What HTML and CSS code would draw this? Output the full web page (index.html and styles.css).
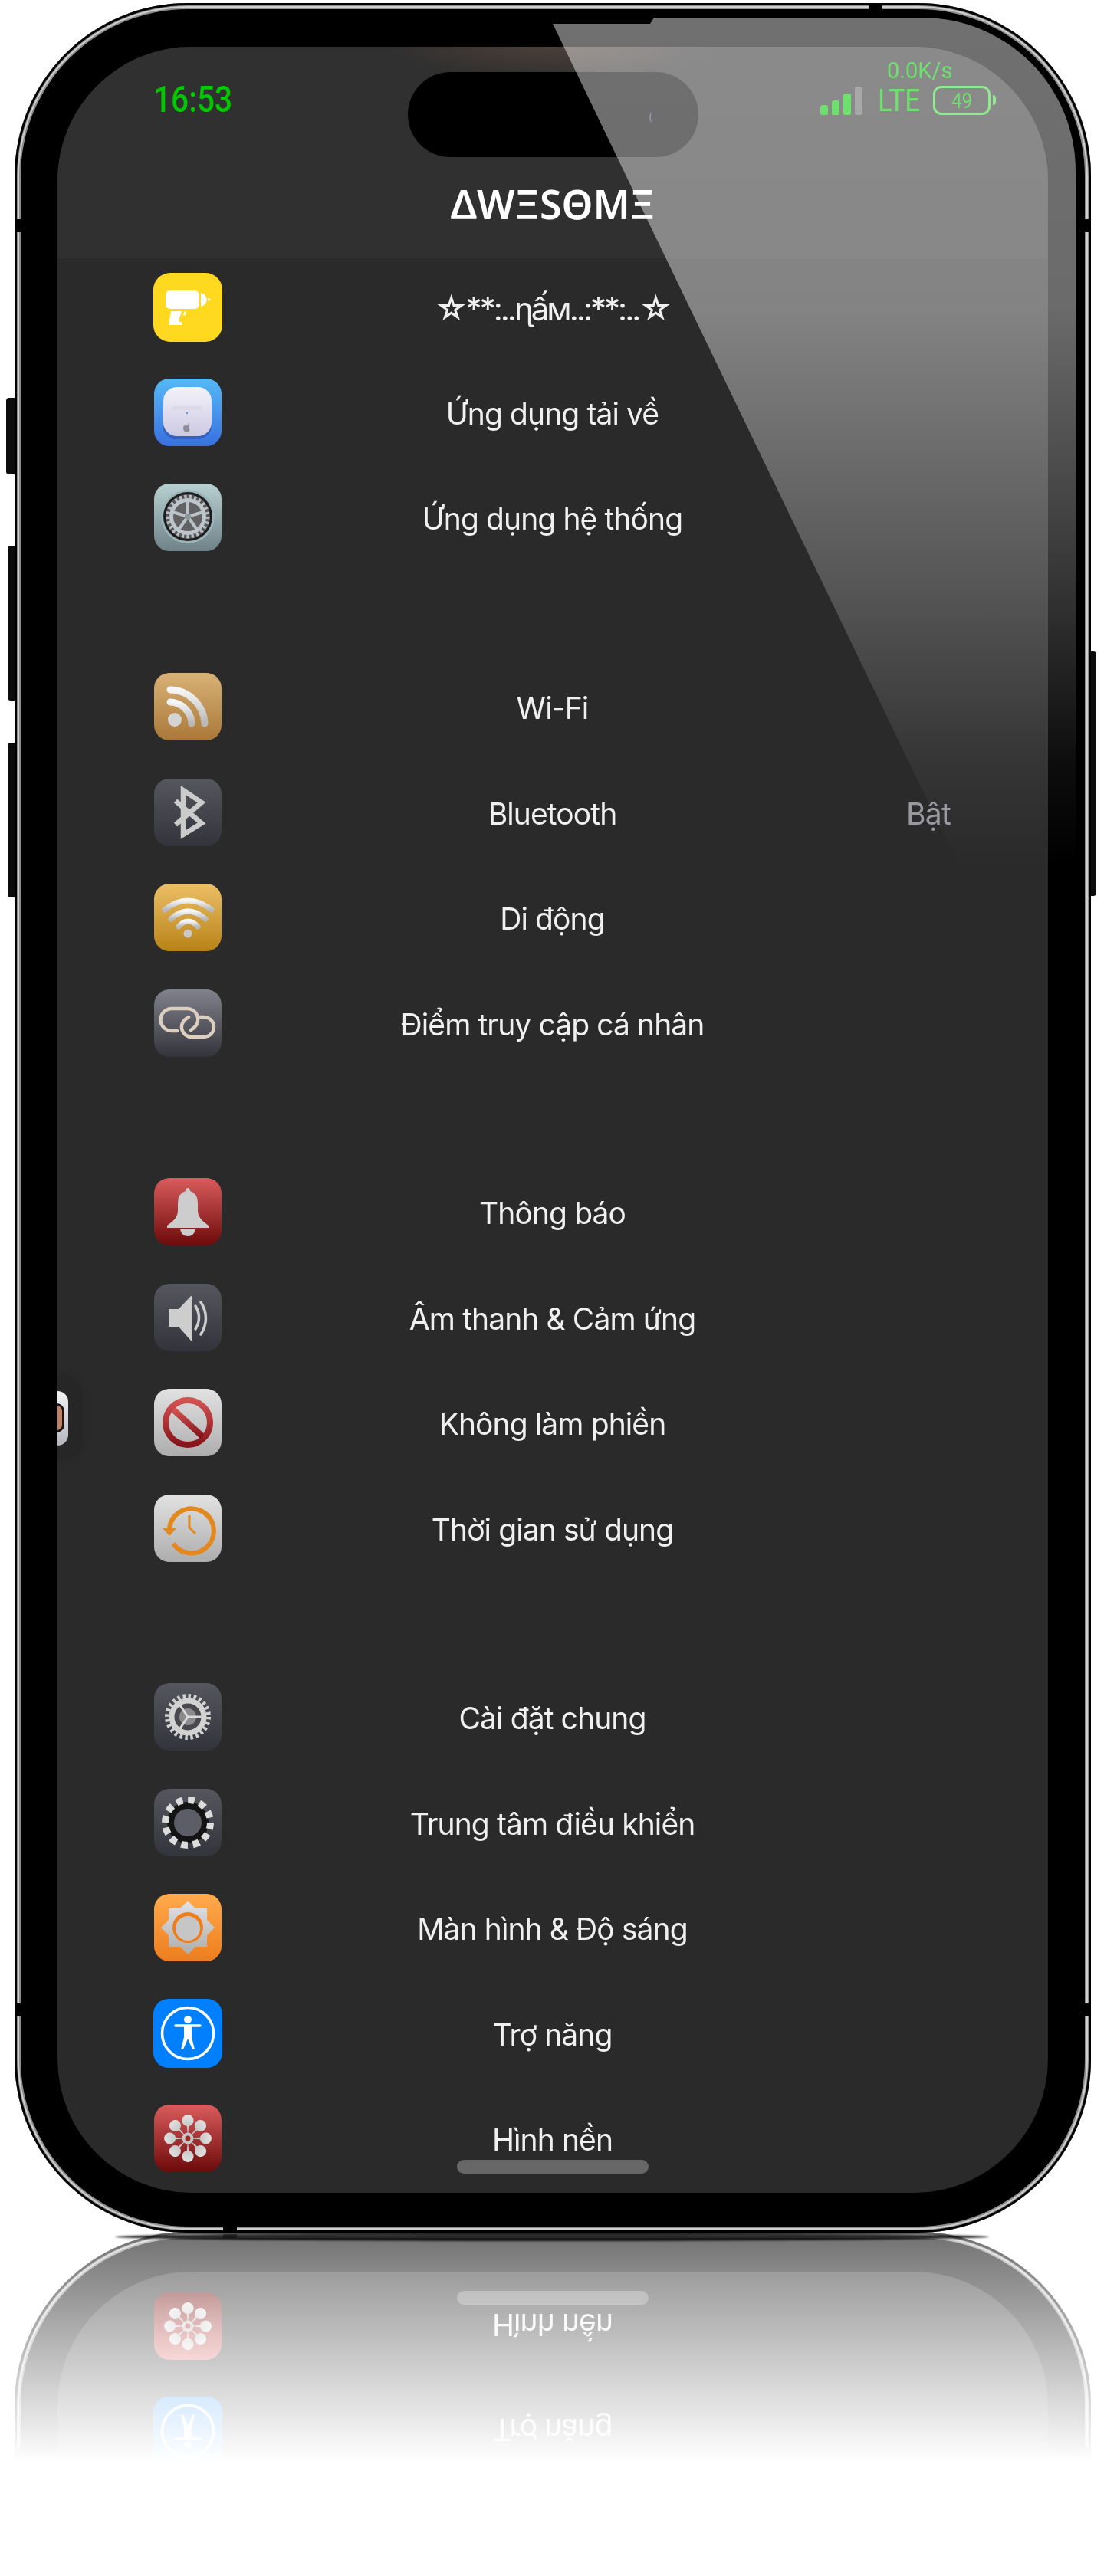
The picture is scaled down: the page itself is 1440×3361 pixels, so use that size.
FILE: index.html
```html
<!DOCTYPE html>
<html lang="vi">
<head>
    <meta charset="UTF-8">
    <meta name="viewport" content="width=device-width, initial-scale=1.0">
    <title>Cài đặt</title>
    <link rel="stylesheet" href="styles.css">
</head>
<body>
    <!-- shared gradients for the icons -->
    <svg class="defs" aria-hidden="true">
        <defs>
            <linearGradient id="g-blue" x1="0" y1="0" x2="0" y2="1"><stop offset="0" stop-color="#55b9f6"/><stop offset="1" stop-color="#3a70e0"/></linearGradient>
            <linearGradient id="g-case" x1="0" y1="0" x2="0" y2="1"><stop offset="0" stop-color="#f3f2f9"/><stop offset="1" stop-color="#cdc9e2"/></linearGradient>
            <linearGradient id="g-steel" x1="0" y1="0" x2="0" y2="1"><stop offset="0" stop-color="#b9d0d2"/><stop offset="1" stop-color="#6e8287"/></linearGradient>
            <linearGradient id="g-brown" x1="0" y1="0" x2="0" y2="1"><stop offset="0" stop-color="#d9b277"/><stop offset="1" stop-color="#a97838"/></linearGradient>
            <linearGradient id="g-dark" x1="0" y1="0" x2="0" y2="1"><stop offset="0" stop-color="#56565e"/><stop offset="1" stop-color="#32333b"/></linearGradient>
            <linearGradient id="g-amber" x1="0" y1="0" x2="0" y2="1"><stop offset="0" stop-color="#ecbf67"/><stop offset="1" stop-color="#b88216"/></linearGradient>
            <linearGradient id="g-slate" x1="0" y1="0" x2="0" y2="1"><stop offset="0" stop-color="#82828d"/><stop offset="1" stop-color="#33343b"/></linearGradient>
            <linearGradient id="g-red" x1="0" y1="0" x2="0" y2="1"><stop offset="0" stop-color="#da5c5c"/><stop offset="1" stop-color="#6d0a0a"/></linearGradient>
            <linearGradient id="g-silver" x1="0" y1="0" x2="0" y2="1"><stop offset="0" stop-color="#e2e2e2"/><stop offset="1" stop-color="#adadad"/></linearGradient>
            <linearGradient id="g-shine" x1="0" y1="0" x2="0" y2="1"><stop offset="0" stop-color="#f6f6f6"/><stop offset="1" stop-color="#b8b8b8"/></linearGradient>
            <linearGradient id="g-stop" x1="0" y1="0" x2="0" y2="1"><stop offset="0" stop-color="#d25252"/><stop offset="1" stop-color="#86141a"/></linearGradient>
            <linearGradient id="g-orange" x1="0" y1="0" x2="0" y2="1"><stop offset="0" stop-color="#ffab4d"/><stop offset="1" stop-color="#ee7d1c"/></linearGradient>
            <path id="petal" d="M44 44L42.800 28a7.500 7.500 0 1 1 2.400 0z"/>
        </defs>
    </svg>

    <div class="phone">
        <span class="side-btn btn-mute"></span>
        <span class="side-btn btn-up"></span>
        <span class="side-btn btn-down"></span>
        <span class="side-btn btn-power"></span>

        <span class="band band-left"></span>
        <span class="band band-right"></span>
        <span class="band band-top"></span>
        <span class="band band-bottom"></span>
        <span class="band band-left2"></span>
        <span class="band band-right2"></span>

        <div class="screen">
            <header class="top">
                <div class="status">
                    <div class="clock"><span>16:53</span></div>
                    <div class="net">
                        <div class="speed"><span>0.0K/s</span></div>
                        <div class="net-row">
                            <div class="signal">
                                <i class="bar bar1"></i>
                                <i class="bar bar2"></i>
                                <i class="bar bar3"></i>
                                <i class="bar bar4"></i>
                            </div>
                            <div class="lte"><span>LTE</span></div>
                            <div class="battery"><span>49</span></div>
                            <i class="battery-nub"></i>
                        </div>
                    </div>
                </div>
                <div class="logo">ΔWΞSΘMΞ</div>
            </header>

            <div class="list">
                <section class="group">
                    <div class="row">
                        <svg class="icon icon-lg" viewBox="0 0 90 90"><rect width="90" height="90" rx="22" fill="#ffd91f"/><rect x="16" y="23" width="44" height="24" rx="6" fill="#fff"/><path d="M62 26q7 2 8 9q-1 7-8 9zM71 33l5 2-5 2zM23 50H37L33 63 38 65 37 68H20zM40 51l3-1-1 5-3 1z" fill="#fff"/></svg>
                        <span class="label label-name">☆**:..ɳấм..:**:..☆</span>
                    </div>
                    <div class="row">
                        <svg class="icon" viewBox="0 0 88 88"><rect width="88" height="88" rx="20" fill="url(#g-blue)"/><rect x="11" y="15" width="64" height="64" rx="18" fill="#2f58b4" opacity=".7"/><rect x="12" y="11" width="63" height="64" rx="18" fill="url(#g-case)"/><rect x="24" y="36" width="38" height="5" rx="2.500" fill="#dcd9e8"/><circle cx="43" cy="45" r="1.200" fill="#5a9bf0"/><path d="M43 60q2-2 3-2q-.3 2-3 2zM39.500 61.500q2-1 3.500 0q1.500-1 3.500 0q-1.500 1-1.300 3q.2 1.500 1.500 2q-1 3-3 3q-.7-.5-1.500-.3q-2 .7-3-1q-2.500-4-.2-6.700z" fill="#8c8c94"/></svg>
                        <span class="label">Ứng dụng tải về</span>
                    </div>
                    <div class="row">
                        <svg class="icon" viewBox="0 0 88 88"><rect width="88" height="88" rx="20" fill="url(#g-steel)"/><circle cx="44" cy="43" r="35" fill="#9ab4b7"/><circle cx="44" cy="43" r="32" fill="#1d1d1f"/><circle cx="44" cy="43" r="29" fill="#565658"/><circle cx="44" cy="43" r="26" fill="none" stroke="#b6bec3" stroke-width="5" stroke-dasharray="3.300 3.200"/><circle cx="44" cy="43" r="21.500" fill="#626264" stroke="#bcc5c9" stroke-width="5"/><g stroke="#b9c3c7" stroke-width="4"><path d="M44 43V22M44 43L64 37M44 43L56 60M44 43L32 60M44 43L24 37"/></g><circle cx="44" cy="43" r="4" fill="#8c969b"/></svg>
                        <span class="label">Ứng dụng hệ thống</span>
                    </div>
                </section>

                <section class="group">
                    <div class="row">
                        <svg class="icon" viewBox="0 0 88 88"><rect width="88" height="88" rx="20" fill="url(#g-brown)"/><circle cx="27" cy="61" r="9" fill="#d4d4d4"/><g fill="none" stroke="url(#g-shine)" stroke-width="9" stroke-linecap="round"><path d="M21 38A29 29 0 0 1 49 66"/><path d="M21 22A46 46 0 0 1 66 66"/></g></svg>
                        <span class="label">Wi-Fi</span>
                    </div>
                    <div class="row">
                        <svg class="icon" viewBox="0 0 88 88"><rect width="88" height="88" rx="20" fill="url(#g-dark)"/><path d="M28 29L62 58 38 73V15L62 31 28 60" fill="none" stroke="#cbcbcb" stroke-width="6.500"/></svg>
                        <span class="label">Bluetooth</span>
                        <span class="value">Bật</span>
                    </div>
                    <div class="row">
                        <svg class="icon" viewBox="0 0 88 88"><rect width="88" height="88" rx="20" fill="url(#g-amber)"/><g fill="none" stroke="url(#g-shine)" stroke-width="7" stroke-linecap="round"><path d="M14 34Q44 10 75 34"/><path d="M22 46Q44 26 67 46"/><path d="M32 56Q44 42 57 56"/></g><circle cx="44" cy="65" r="5.500" fill="#c9c9c9"/></svg>
                        <span class="label">Di động</span>
                    </div>
                    <div class="row">
                        <svg class="icon" viewBox="0 0 88 88"><rect width="88" height="88" rx="20" fill="url(#g-slate)"/><g fill="none" stroke="#dccfc0" stroke-width="4.500" stroke-linecap="round"><path d="M30 54H23a14.500 14.500 0 0 1 0-29h20a14 14 0 0 1 10 24l-5 4"/><path d="M60 36h5a13 13 0 0 1 0 26H49a13 13 0 0 1-7-24l3-2"/></g></svg>
                        <span class="label">Điểm truy cập cá nhân</span>
                    </div>
                </section>

                <section class="group">
                    <div class="row">
                        <svg class="icon" viewBox="0 0 88 88"><rect width="88" height="88" rx="20" fill="url(#g-red)"/><path d="M41 17q0-4 3-4t3 4q10 3 10 16v10q0 10 14 19v3H17v-3q14-9 14-19V33q0-13 10-16zM34 67h20q-2 9-10 9t-10-9z" fill="#cdcdcd"/></svg>
                        <span class="label">Thông báo</span>
                    </div>
                    <div class="row">
                        <svg class="icon" viewBox="0 0 88 88"><rect width="88" height="88" rx="20" fill="url(#g-dark)"/><path d="M19 33H32L48 16q2-1 2 2V72q0 3-2 2L32 56H19z" fill="#cdcdcd"/><g fill="none" stroke="#cdcdcd" stroke-width="3.500" stroke-linecap="round"><path d="M54 29q9 15 0 30"/><path d="M61 24q13 21 0 42"/></g></svg>
                        <span class="label">Âm thanh &amp; Cảm ứng</span>
                    </div>
                    <div class="row">
                        <svg class="icon" viewBox="0 0 88 88"><rect width="88" height="88" rx="20" fill="url(#g-silver)"/><g fill="none" stroke="url(#g-stop)" stroke-width="8"><circle cx="44" cy="44" r="29"/><path d="M25 27L63 62"/></g></svg>
                        <span class="label">Không làm phiền</span>
                    </div>
                    <div class="row">
                        <svg class="icon" viewBox="0 0 88 88"><rect width="88" height="88" rx="20" fill="url(#g-silver)"/><g fill="none" stroke="#e2881f"><path d="M20 44A29 29 0 1 1 25 64" stroke-width="6"/><path d="M46 27V43L54 51" stroke-width="3"/></g><path d="M11 44H29L20 54z" fill="#e2881f"/></svg>
                        <span class="label">Thời gian sử dụng</span>
                    </div>
                </section>

                <section class="group">
                    <div class="row">
                        <svg class="icon" viewBox="0 0 88 88"><rect width="88" height="88" rx="20" fill="url(#g-dark)"/><circle cx="44" cy="44" r="27" fill="none" stroke="#d2d2d2" stroke-width="6" stroke-dasharray="3.500 3.570"/><circle cx="44" cy="44" r="21" fill="none" stroke="#d2d2d2" stroke-width="7"/><circle cx="44" cy="44" r="17" fill="#4a4a4e"/><circle cx="44" cy="44" r="11" fill="#8b8b8e"/><g stroke="#d9d9d9" stroke-width="3"><path d="M44 44L34 29M44 44H63M44 44L34 59"/></g></svg>
                        <span class="label">Cài đặt chung</span>
                    </div>
                    <div class="row">
                        <svg class="icon" viewBox="0 0 88 88"><rect width="88" height="88" rx="20" fill="url(#g-dark)"/><circle cx="44" cy="44" r="27" fill="#141414"/><circle cx="44" cy="44" r="29.500" fill="none" stroke="#dcdcdc" stroke-width="9" stroke-dasharray="8.700 6.740"/><circle cx="44" cy="44" r="18" fill="#5d5d68"/></svg>
                        <span class="label">Trung tâm điều khiển</span>
                    </div>
                    <div class="row">
                        <svg class="icon" viewBox="0 0 88 88"><rect width="88" height="88" rx="20" fill="url(#g-orange)"/><path d="M44 9l10 10h15v15l10 10-10 10v15H54L44 79 34 69H19V54L9 44l10-10V19h15z" fill="url(#g-silver)"/><circle cx="44" cy="44" r="20" fill="#ee7d1c"/><circle cx="44" cy="45" r="16" fill="#c6c6c6"/></svg>
                        <span class="label">Màn hình &amp; Độ sáng</span>
                    </div>
                    <div class="row">
                        <svg class="icon icon-lg" viewBox="0 0 90 90"><rect width="90" height="90" rx="20" fill="#007fff"/><circle cx="45" cy="45" r="33.500" fill="none" stroke="#fff" stroke-width="3.500"/><circle cx="45" cy="27" r="5" fill="#fff"/><path d="M29 35H61" stroke="#fff" stroke-width="3.500" stroke-linecap="round"/><path d="M40 35h10V50L54 66h-3L45 52 39 66h-3L40 50z" fill="#fff"/></svg>
                        <span class="label">Trợ năng</span>
                    </div>
                    <div class="row">
                        <svg class="icon" viewBox="0 0 88 88"><rect width="88" height="88" rx="20" fill="url(#g-red)"/><g fill="url(#g-silver)"><use href="#petal"/><use href="#petal" transform="rotate(45 44 44)"/><use href="#petal" transform="rotate(90 44 44)"/><use href="#petal" transform="rotate(135 44 44)"/><use href="#petal" transform="rotate(180 44 44)"/><use href="#petal" transform="rotate(225 44 44)"/><use href="#petal" transform="rotate(270 44 44)"/><use href="#petal" transform="rotate(315 44 44)"/></g><circle cx="44" cy="44" r="7.500" fill="#c4c4c4"/><circle cx="44" cy="44" r="3.500" fill="#a52525"/></svg>
                        <span class="label">Hình nền</span>
                    </div>
                </section>
            </div>

            <!-- things floating over the list -->
            <div class="float-btn">
                <div class="float-pill"><i class="float-core"></i></div>
            </div>
            <div class="island"><i class="island-lens"></i></div>
            <div class="home-bar"></div>
        </div>

        <div class="gloss"></div>
    </div>
    <div class="floor-shadow"></div>
</body>
</html>
```

FILE: styles.css
```css
* {
    box-sizing: border-box;
}

html, body {
    margin: 0;
    height: 3361px;
    overflow: hidden;
    background: white;
}

body {
    position: relative;
    font-family: Inter, "Noto Sans", "DejaVu Sans", sans-serif;
    color: #f0f0f0;
}

.defs {
    position: absolute;
    width: 0;
    height: 0;
}

/* phone body */
.phone {
    position: relative;
    width: 1404px;
    height: 2909px;
    margin: 4px 0 0 19px;
    padding: 57px 56px 52px;
    background: black;
    border-radius: 226px;
    box-shadow:
        inset 0 0 0 3px #000,
        inset 0 0 0 4px #8d8d8d,
        inset 0 0 0 6px #cfcfcf,
        inset 0 0 0 8px #8d8d8d;
    -webkit-box-reflect: below -1px linear-gradient(to bottom, transparent 89.700%, rgba(255,255,255,0.56));
}

.side-btn {
    position: absolute;
    background: #0c0c0c;
}

.btn-mute {
    left: -11px;
    top: 515px;
    width: 11px;
    height: 100px;
    border-radius: 4px 0 0 4px;
}

.btn-up {
    left: -9px;
    top: 708px;
    width: 9px;
    height: 202px;
    border-radius: 4px 0 0 4px;
}

.btn-down {
    left: -9px;
    top: 965px;
    width: 9px;
    height: 202px;
    border-radius: 4px 0 0 4px;
}

.btn-power {
    right: -7px;
    top: 846px;
    width: 7px;
    height: 319px;
    border-radius: 0 4px 4px 0;
}

.band {
    position: absolute;
    background: black;
}

.band-left, .band-right, .band-left2, .band-right2 {
    width: 9px;
    height: 17px;
}

.band-left { left: 0; top: 282px; }
.band-right { right: 0; top: 282px; }
.band-left2 { left: 0; top: 2610px; }
.band-right2 { right: 0; top: 2610px; }

.band-top, .band-bottom {
    width: 18px;
    height: 9px;
}

.band-top { left: 1114px; top: 0; }
.band-bottom { left: 272px; bottom: 0; }

/* screen */
.screen {
    position: relative;
    height: 100%;
    background: #2a2a2a;
    border-radius: 175px;
    overflow: hidden;
}

.top {
    height: 276px;
    background: radial-gradient(ellipse 210px 40px at 50% 0, #4c3f39, transparent), #303030;
    border-bottom: 1px solid #414141;
}

.status {
    display: flex;
    justify-content: space-between;
    align-items: flex-start;
    height: 150px;
    padding: 16px 68px 0 125px;
    font-family: Roboto, sans-serif;
}

.clock {
    margin-top: 25px;
    font-size: 49px;
    line-height: 56px;
    font-weight: 500;
    color: #00c800;
    transform: scaleX(0.83);
    transform-origin: left;
}

.net {
    display: flex;
    flex-direction: column;
    align-items: flex-end;
}

.speed {
    width: 87px;
    margin-right: 55px;
    font-size: 29px;
    line-height: 30px;
    color: #00c800;
    white-space: nowrap;
}

.net-row {
    display: flex;
    align-items: flex-end;
    height: 38px;
    margin-top: 5px;
}

.signal {
    display: flex;
    align-items: flex-end;
    gap: 5px;
    height: 37px;
}

.bar {
    width: 10px;
    background: #00c800;
    border-radius: 3px 3px 2px 2px;
}

.bar1 { height: 13px; }
.bar2 { height: 19px; }
.bar3 { height: 28px; }
.bar4 { height: 37px; background: #666; }

.lte {
    width: 56px;
    margin: 0 16px 0 20px;
    font-size: 41px;
    line-height: 38px;
    color: #00c800;
    transform: scaleX(0.86);
    transform-origin: left;
}

.battery {
    display: flex;
    align-items: center;
    justify-content: center;
    width: 75px;
    height: 38px;
    font-size: 28px;
    color: #00c800;
    border: 3px solid #3cdc3c;
    border-radius: 11px;
}

.battery span {
    transform: scaleX(0.85);
}

.battery-nub {
    width: 4px;
    height: 13px;
    margin: 0 0 13px 3px;
    background: #3cdc3c;
    border-radius: 0 4px 4px 0;
}

.logo {
    margin-top: 29px;
    font-family: "Noto Sans", sans-serif;
    font-size: 52px;
    line-height: 52px;
    font-weight: 600;
    text-align: center;
    color: white;
}

/* settings list */
.list {
    margin-top: -5px;
}

.group {
    margin-bottom: 109.500px;
}

.row {
    display: grid;
    grid-template-columns: 1fr auto 1fr;
    align-items: center;
    height: 137.400px;
    padding: 0 127px 0 126px;
}

.icon {
    display: block;
    width: 88px;
    height: 88px;
}

.icon-lg {
    width: 90px;
    height: 90px;
    margin-left: -1px;
}

.label {
    grid-column: 2;
    margin-top: 4px;
    font-size: 39px;
    font-weight: 400;
    line-height: 52px;
    letter-spacing: -0.9px;
    white-space: nowrap;
}

.label-name {
    font-size: 42px;
    letter-spacing: -3px;
}

.value {
    justify-self: end;
    margin-top: 4px;
    font-size: 39px;
    font-weight: 400;
    line-height: 52px;
    letter-spacing: -0.7px;
    color: #98989e;
}

/* overlays */
.island {
    position: absolute;
    left: 457px;
    top: 33px;
    width: 379px;
    height: 111px;
    background: black;
    border-radius: 56px;
}

.island-lens {
    position: absolute;
    right: 56px;
    top: 52px;
    width: 8px;
    height: 14px;
    border-left: 2px solid #3c3c66;
    border-radius: 50%;
}

.home-bar {
    position: absolute;
    left: 521px;
    bottom: 25px;
    width: 250px;
    height: 18px;
    background: #676767;
    border-radius: 9px;
}

.float-btn {
    position: absolute;
    left: -20px;
    top: 1734px;
    display: flex;
    align-items: center;
    width: 52px;
    height: 110px;
    background: rgba(0,0,0,0.08);
    border-radius: 26px;
    box-shadow: 0 0 12px rgba(0,0,0,0.12);
}

.float-pill {
    display: flex;
    align-items: center;
    width: 34px;
    height: 71px;
    background: linear-gradient(#f2f2f4, #b6b6be);
    border-radius: 14px;
}

.float-core {
    width: 29px;
    height: 38px;
    background: #c57f60;
    border: 3px solid #161616;
    border-radius: 10px;
}

.gloss {
    position: absolute;
    left: 20px;
    top: 19px;
    width: 1364px;
    height: 1107px;
    background: linear-gradient(rgba(255,255,255,0.44), rgba(255,255,255,0.42) 34%, rgba(255,255,255,0.2) 68%, rgba(255,255,255,0.05) 88%, transparent);
    border-radius: 200px 200px 0 0;
    clip-path: polygon(682px 8px, 809px 8px, 814px 0, 1364px 0, 1364px 1107px, 1212px 1107px);
}

.floor-shadow {
    position: absolute;
    left: 150px;
    top: 2913px;
    width: 1140px;
    height: 11px;
    background: rgba(0,0,0,0.8);
    border-radius: 50%;
    filter: blur(1px);
}
```
